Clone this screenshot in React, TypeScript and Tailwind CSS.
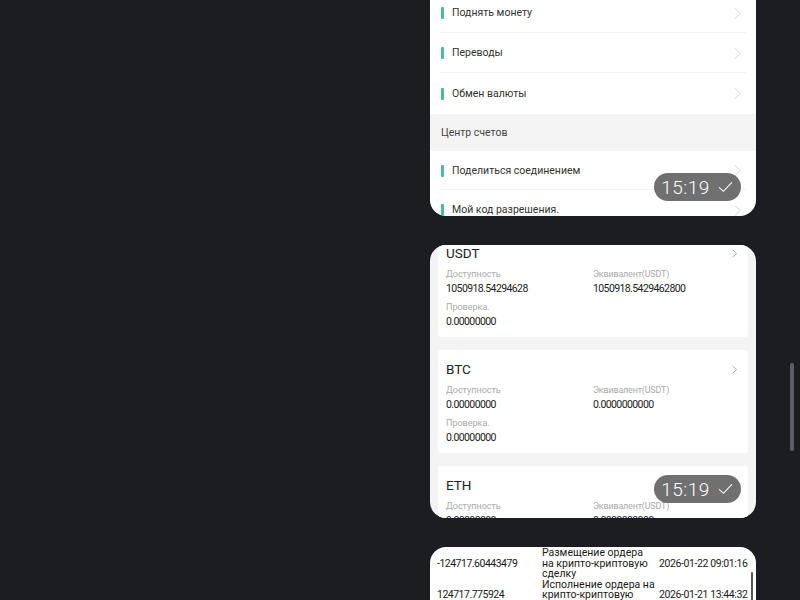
import React from "react";

const font = { fontFamily: "Roboto, 'Noto Sans', sans-serif" };

const Chevron = ({ className }: { className?: string }) => (
  <svg viewBox="0 0 8 14" className={className} fill="none" stroke="currentColor" strokeWidth="1.1">
    <path d="M1 1l6 6-6 6" />
  </svg>
);

const TimeBadge = () => (
  <div className="absolute right-[15px] bottom-[15px] flex h-[28px] w-[87px] items-center justify-center gap-[7px] rounded-full bg-[#606060]/90 text-white">
    <span className="text-[19px] font-light leading-none tracking-[0.5px]">15:19</span>
    <svg viewBox="0 0 18 14" className="h-[12px] w-[17px]" fill="none" stroke="currentColor" strokeWidth="1.2">
      <path d="M1.5 7.5l5 4.5L16.5 1.5" />
    </svg>
  </div>
);

const MenuRow = ({ label, h, last }: { label: string; h: string; last?: boolean }) => (
  <div className={`relative flex items-center pl-[11px] pr-[15px] ${h}`}>
    <span className="h-[12px] w-[3px] rounded-[1px] bg-[#48bc9d]" />
    <span className="ml-[8px] text-[10.5px] text-[#333]">{label}</span>
    <Chevron className="ml-auto h-[13px] w-[7px] text-[#d2d2d2]" />
    {!last && <div className="absolute bottom-0 left-[10px] right-[10px] border-b border-[#f2f2f2]" />}
  </div>
);

const assets = [
  { coin: "USDT", avail: "1050918.54294628", eq: "1050918.5429462800", check: "0.00000000" },
  { coin: "BTC", avail: "0.00000000", eq: "0.0000000000", check: "0.00000000" },
  { coin: "ETH", avail: "0.00000000", eq: "0.0000000000", check: "0.00000000" },
];

const AssetPanel = ({ a }: { a: (typeof assets)[number] }) => (
  <div className="relative h-[103px] shrink-0 rounded-[3px] bg-white px-[8px] pt-[11px]">
    <div className="h-[16px] text-[13.5px] leading-[16px] text-[#222]">{a.coin}</div>
    <Chevron className="absolute right-[11px] top-[15px] h-[9px] w-[5px] text-[#888]" />
    <div className="mt-[7px] grid grid-cols-[147px_1fr]">
      <div className="text-[9px] leading-[12px] text-[#aaa]">Доступность</div>
      <div className="text-[9px] leading-[12px] tracking-[-0.2px] text-[#aaa]">Эквивалент(USDT)</div>
      <div className="mt-[3px] text-[10.5px] leading-[12px] tracking-[-0.6px] text-[#222]">{a.avail}</div>
      <div className="mt-[3px] text-[10.5px] leading-[12px] tracking-[-0.6px] text-[#222]">{a.eq}</div>
      <div className="mt-[6px] text-[9px] leading-[12px] text-[#aaa]">Проверка.</div>
      <div />
      <div className="mt-[3px] text-[10.5px] leading-[12px] tracking-[-0.6px] text-[#222]">{a.check}</div>
    </div>
  </div>
);

const records = [
  { amount: "-124717.60443479", desc: ["Размещение ордера", "на крипто-криптовую", "сделку"], time: "2026-01-22 09:01:16" },
  { amount: "124717.775924", desc: ["Исполнение ордера на", "крипто-криптовую", "сделку"], time: "2026-01-21 13:44:32" },
];

export default function App() {
  return (
    <div className="relative h-[600px] w-full overflow-hidden bg-[#1c1d21]" style={font}>
      <div className="flex flex-col items-end gap-[29px] pr-[44px]">
        {/* menu screenshot */}
        <div className="relative h-[216px] w-[326px] overflow-hidden rounded-b-[16px] bg-white">
          <div className="-mt-[7px] flex flex-col">
            <MenuRow label="Поднять монету" h="h-[40px]" />
            <MenuRow label="Переводы" h="h-[40px]" />
            <MenuRow label="Обмен валюты" h="h-[41px]" last />
            <div className="flex h-[37px] items-center bg-[#f4f4f4] px-[11px] text-[10.5px] text-[#444]">
              Центр счетов
            </div>
            <MenuRow label="Поделиться соединением" h="h-[39px]" />
            <MenuRow label="Мой код разрешения." h="h-[40px]" last />
          </div>
          <TimeBadge />
        </div>

        {/* assets screenshot */}
        <div className="relative h-[273px] w-[326px] overflow-hidden rounded-[16px] bg-[#f4f4f4]">
          <div className="-mt-[11px] flex flex-col gap-[13px] px-[8px]">
            {assets.map((a) => (
              <AssetPanel key={a.coin} a={a} />
            ))}
          </div>
          <TimeBadge />
        </div>

        {/* records screenshot */}
        <div className="relative h-[60px] w-[326px] overflow-hidden rounded-t-[16px] bg-white">
          <div className="flex flex-col pt-[1px]">
            {records.map((r) => (
              <div key={r.time} className="flex items-center text-[10.5px] leading-[10.5px] text-[#1a1a1a]">
                <div className="w-[112px] pl-[7px] tracking-[-0.5px]">{r.amount}</div>
                <div className="w-[117px]">
                  {r.desc.map((d) => (
                    <div key={d}>{d}</div>
                  ))}
                </div>
                <div className="tracking-[-0.4px]">{r.time}</div>
              </div>
            ))}
          </div>
          <div className="absolute right-[3px] top-[25px] h-[60px] w-[2px] rounded-full bg-[#555]" />
        </div>
      </div>

      {/* window scrollbar */}
      <div className="absolute right-[6px] top-[363px] h-[88px] w-[4px] rounded-full bg-[#5d5e66]" />
    </div>
  );
}
